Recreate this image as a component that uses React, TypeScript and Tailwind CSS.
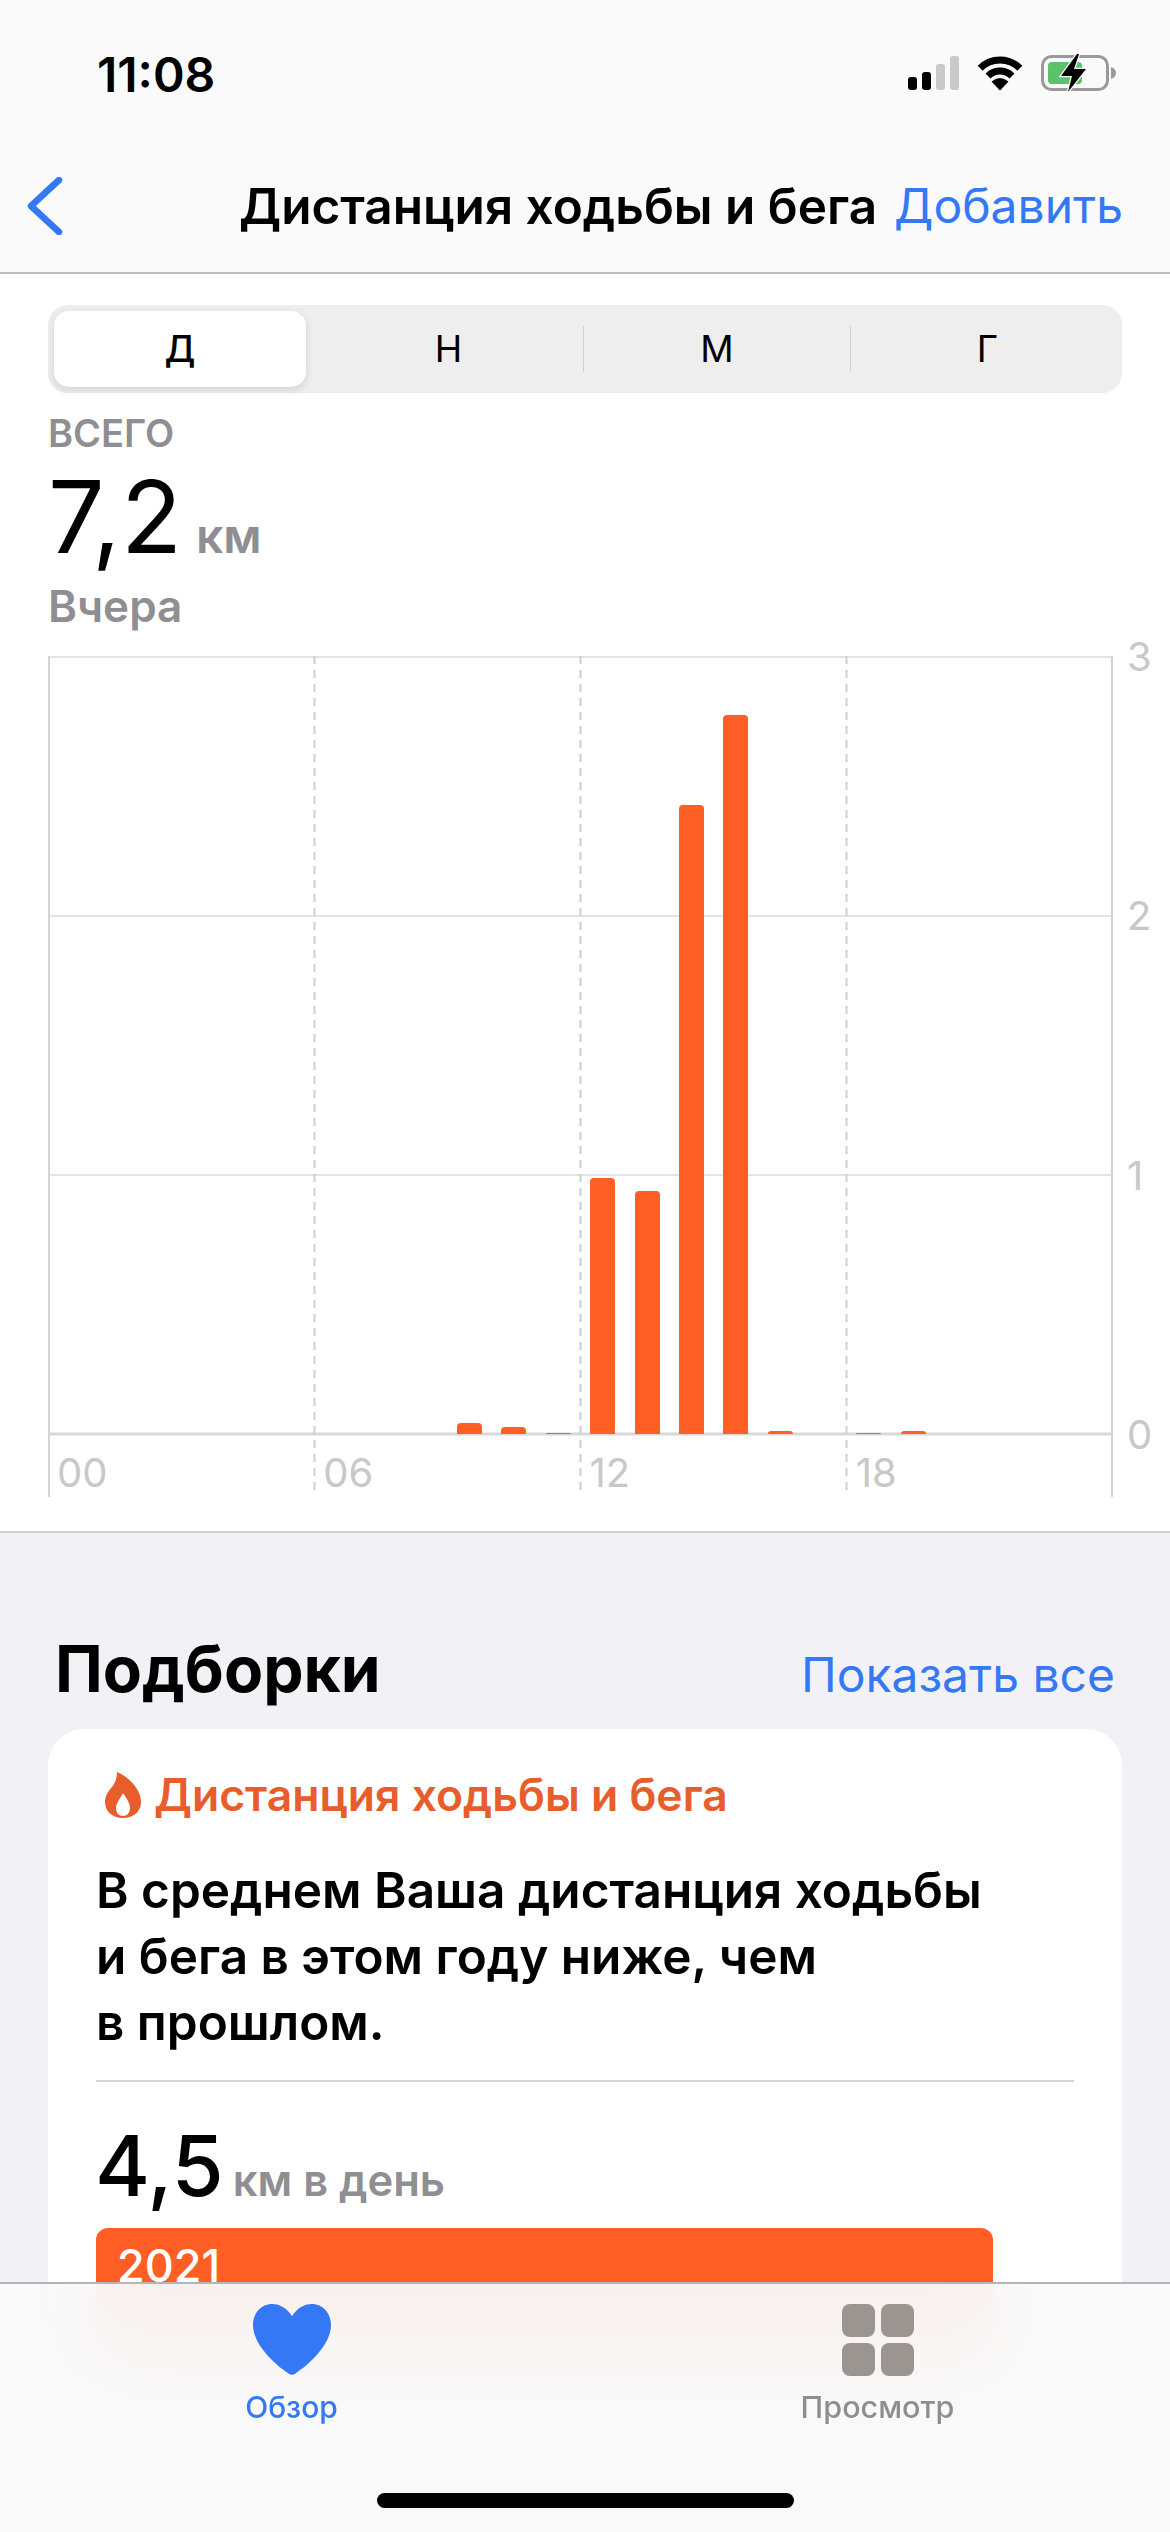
import React from 'react';

const FONT = "font-['Inter','Noto_Sans',sans-serif]";

// bar height in px for each hour that has data
const hours: { hour: number; px: number }[] = [
  { hour: 9, px: 11 },
  { hour: 10, px: 7 },
  { hour: 11, px: 1 },
  { hour: 12, px: 256 },
  { hour: 13, px: 243 },
  { hour: 14, px: 629 },
  { hour: 15, px: 719 },
  { hour: 16, px: 3 },
  { hour: 18, px: 1 },
  { hour: 19, px: 3 },
];

const StatusIcons: React.FC = () => (
  <div className="flex items-center gap-[17px]">
    <div className="flex items-end gap-[5px] h-[34px]">
      <div className="w-[9px] h-[13px] rounded-[3px] bg-black" />
      <div className="w-[9px] h-[18px] rounded-[3px] bg-black" />
      <div className="w-[9px] h-[26px] rounded-[3px] bg-[#c9c9c9]" />
      <div className="w-[9px] h-[34px] rounded-[3px] bg-[#c9c9c9]" />
    </div>
    <svg width="48" height="36" viewBox="0 0 48 36">
      <path d="M4.2 13.2a28 28 0 0 1 39.600 0M12 21a17 17 0 0 1 24 0" fill="none" stroke="#000" strokeWidth="7" />
      <path d="M24 35.500 15.500 26.500Q24 19.500 32.500 26.500Z" fill="#000" />
    </svg>
    <svg width="76" height="40" viewBox="0 0 76 40">
      <rect x="1.500" y="3.500" width="65" height="33" rx="9" fill="none" stroke="#9a9a9a" strokeWidth="3" />
      <path d="M70 14v12c3-1 5-3 5-6s-2-5-5-6Z" fill="#9a9a9a" />
      <rect x="7" y="9" width="34" height="22" rx="4" fill="#5ac26b" />
      <path d="M36 1 20 23h11l-4 16 18-23H33l5-15Z" fill="#000" stroke="#fafafa" strokeWidth="2.500" paintOrder="stroke" />
    </svg>
  </div>
);

const Segments: React.FC = () => (
  <div className="mx-[48px] h-[88px] rounded-[20px] bg-[#eeeeef] flex items-center p-[6px] text-[37px] text-black">
    <div className="w-[252px] h-[76px] rounded-[15px] bg-white shadow-[0_3px_8px_rgba(0,0,0,0.12)] flex items-center justify-center font-medium">
      Д
    </div>
    <div className="w-[277px] flex items-center justify-center pl-[8px]">Н</div>
    <div className="w-px h-[46px] bg-[#cfcfd1]" />
    <div className="w-[266px] flex items-center justify-center">М</div>
    <div className="w-px h-[46px] bg-[#cfcfd1]" />
    <div className="flex-1 flex items-center justify-center pl-[8px]">Г</div>
  </div>
);

const Chart: React.FC = () => (
  <div className="flex ml-[48px] mt-[26px]">
    <div className="relative w-[1065px] h-[841px]">
      <svg className="absolute inset-0" width="1065" height="841" viewBox="0 0 1065 841">
        {/* horizontal grid */}
        <line x1="0" y1="1" x2="1065" y2="1" stroke="#e4e4e4" strokeWidth="2" />
        <line x1="0" y1="260" x2="1065" y2="260" stroke="#e4e4e4" strokeWidth="2" />
        <line x1="0" y1="519" x2="1065" y2="519" stroke="#e4e4e4" strokeWidth="2" />
        <line x1="0" y1="778" x2="1065" y2="778" stroke="#d8d8d8" strokeWidth="3" />
        {/* edges and dashed 6h marks */}
        <line x1="1" y1="0" x2="1" y2="841" stroke="#d4d4d4" strokeWidth="2" />
        <line x1="1064" y1="0" x2="1064" y2="841" stroke="#d4d4d4" strokeWidth="2" />
        {[266.5, 532.5, 798.5].map((x) => (
          <line key={x} x1={x} y1="0" x2={x} y2="836" stroke="#cfcfcf" strokeWidth="2" strokeDasharray="8 6" />
        ))}
      </svg>
      {/* one column per hour */}
      <div className="absolute left-0 right-0 top-0 h-[778px] grid grid-cols-[repeat(24,1fr)] items-end">
        {Array.from({ length: 24 }, (_, h) => {
          const bar = hours.find((b) => b.hour === h);
          return (
            <div key={h} className="flex justify-center">
              {bar && (
                <div
                  className="w-[25px] bg-[#ff5e25] rounded-t-[4px]"
                  style={{ height: bar.px }}
                />
              )}
            </div>
          );
        })}
      </div>
      <div className="absolute left-0 right-0 bottom-[1px] grid grid-cols-4 text-[40px] leading-[46px] text-[#c8c8c8]">
        {['00', '06', '12', '18'].map((t) => (
          <span key={t} className="pl-[9px]">{t}</span>
        ))}
      </div>
    </div>
    <div className="h-[778px] -mt-[4px] ml-[14px] flex flex-col justify-between text-[40px] leading-[46px] text-[#c8c8c8] -translate-y-[18px]">
      <span>3</span>
      <span>2</span>
      <span>1</span>
      <span className="-mb-[46px]">0</span>
    </div>
  </div>
);

const App: React.FC = () => {
  return (
    <div className={`relative w-[1170px] h-[2532px] overflow-hidden bg-[#f1f1f6] ${FONT}`}>
      {/* status + navigation bar */}
      <header className="h-[274px] bg-[#fafafa] border-b-2 border-[#bdbdbf] flex flex-col">
        <div className="h-[146px] pl-[97px] pr-[53px] pt-[53px] flex items-start justify-between">
          <span className="text-[48px] leading-[44px] font-semibold text-black">11:08</span>
          <StatusIcons />
        </div>
        <div className="flex items-center h-[86px] pl-[27px] pr-[47px] mt-[17px]">
          <svg width="36" height="58" viewBox="0 0 36 58" fill="none">
            <path d="M32 3 4 29l28 26" stroke="#3478f6" strokeWidth="6.500" strokeLinecap="round" strokeLinejoin="round" />
          </svg>
          <span className="ml-[176px] text-[49.500px] font-semibold text-black whitespace-nowrap">Дистанция ходьбы и бега</span>
          <span className="ml-auto text-[48px] text-[#3478f6] whitespace-nowrap">Добавить</span>
        </div>
      </header>

      {/* day total and hourly chart */}
      <section className="h-[1259px] bg-white border-b-2 border-[#d1d1d3] pt-[31px]">
        <Segments />
        <div className="pl-[48px] mt-[18px]">
          <div className="text-[38px] leading-[44px] font-semibold text-[#8e8e93]">ВСЕГО</div>
          <div className="flex items-baseline gap-[14px] h-[104px] mt-[10px]">
            <span className="text-[100px] leading-[104px] text-black">7,2</span>
            <span className="text-[48px] font-semibold text-[#8e8e93]">км</span>
          </div>
          <div className="text-[44px] leading-[48px] font-semibold text-[#8e8e93] mt-[13px]">Вчера</div>
        </div>
        <Chart />
      </section>

      {/* highlights */}
      <section className="px-[48px] pt-[88px]">
        <div className="flex items-baseline justify-between pl-[7px] pr-[7px] h-[108px]">
          <h2 className="text-[64px] font-bold text-black">Подборки</h2>
          <span className="text-[48px] text-[#3478f6]">Показать все</span>
        </div>
        <div className="bg-white rounded-[36px] px-[48px] pt-[40px] h-[700px]">
          <div className="flex items-center gap-[13px]">
            <svg width="36" height="47" viewBox="0 0 36 47" className="ml-[9px] shrink-0">
              <path
                fillRule="evenodd"
                d="M12 0c8 3 24 15 24 30 0 10-8 16-18 16S0 40 0 30c0-8 5-12 9-18 2-3 3-8 3-12ZM18 21c4 6 7 10 7 15 0 5-3 8-7 8s-7-3-7-8c0-5 4-9 7-15Z"
                fill="#e85d2c"
              />
            </svg>
            <span className="text-[44.500px] leading-[52px] font-semibold text-[#e85d2c]">Дистанция ходьбы и бега</span>
          </div>
          <p className="mt-[36px] text-[49.500px] leading-[66px] font-semibold text-black">
            В среднем Ваша дистанция ходьбы<br />и бега в этом году ниже, чем<br />в прошлом.
          </p>
          <div className="mt-[25px] h-[2px] bg-[#d5d5d7]" />
          <div className="flex items-baseline gap-[9px] mt-[34px] h-[112px]">
            <span className="text-[84px] leading-[100px] font-medium text-black -ml-[1px]">4,5</span>
            <span className="text-[43.500px] font-semibold text-[#8e8e93]">км в день</span>
          </div>
          <div className="w-[897px] h-[120px] rounded-[12px] bg-[#ff5e25] pl-[21px] pt-[12px] text-[45px] leading-[52px] font-medium text-white">
            2021
          </div>
        </div>
      </section>

      {/* tab bar sits over the scrolled content */}
      <nav className="absolute left-0 right-0 bottom-0 h-[250px] bg-[#f9f9f9]/95 backdrop-blur-2xl border-t-2 border-[#b5b5b7]">
        <div className="grid grid-cols-2 pt-[20px]">
          <div className="flex flex-col items-center w-[583px]">
            <svg width="78" height="72" viewBox="0 0 77 71">
              <path
                d="M38.5 12C33 3 25 0 19 0 8 0 0 9 0 21c0 19 22 39 35 47.5q3.500 2.500 7 0C55 60 77 40 77 21 77 9 69 0 58 0 52 0 44 3 38.500 12Z"
                fill="#3478f6"
              />
            </svg>
            <span className="mt-[11px] text-[30px] leading-[40px] font-medium text-[#3478f6]">Обзор</span>
          </div>
          <div className="flex flex-col items-center pl-[108px] w-[685px] -translate-x-[104px]">
            <div className="grid grid-cols-2 gap-[6px] w-[72px]">
              <div className="h-[33px] rounded-[8px] bg-[#9a9590]" />
              <div className="h-[33px] rounded-[8px] bg-[#9a9590]" />
              <div className="h-[33px] rounded-[8px] bg-[#9a9590]" />
              <div className="h-[33px] rounded-[8px] bg-[#9a9590]" />
            </div>
            <span className="mt-[11px] text-[30.500px] leading-[40px] font-medium text-[#8e8e8e]">Просмотр</span>
          </div>
        </div>
        <div className="absolute left-[377px] bottom-[24px] w-[417px] h-[15px] rounded-full bg-black" />
      </nav>
    </div>
  );
};

export default App;
